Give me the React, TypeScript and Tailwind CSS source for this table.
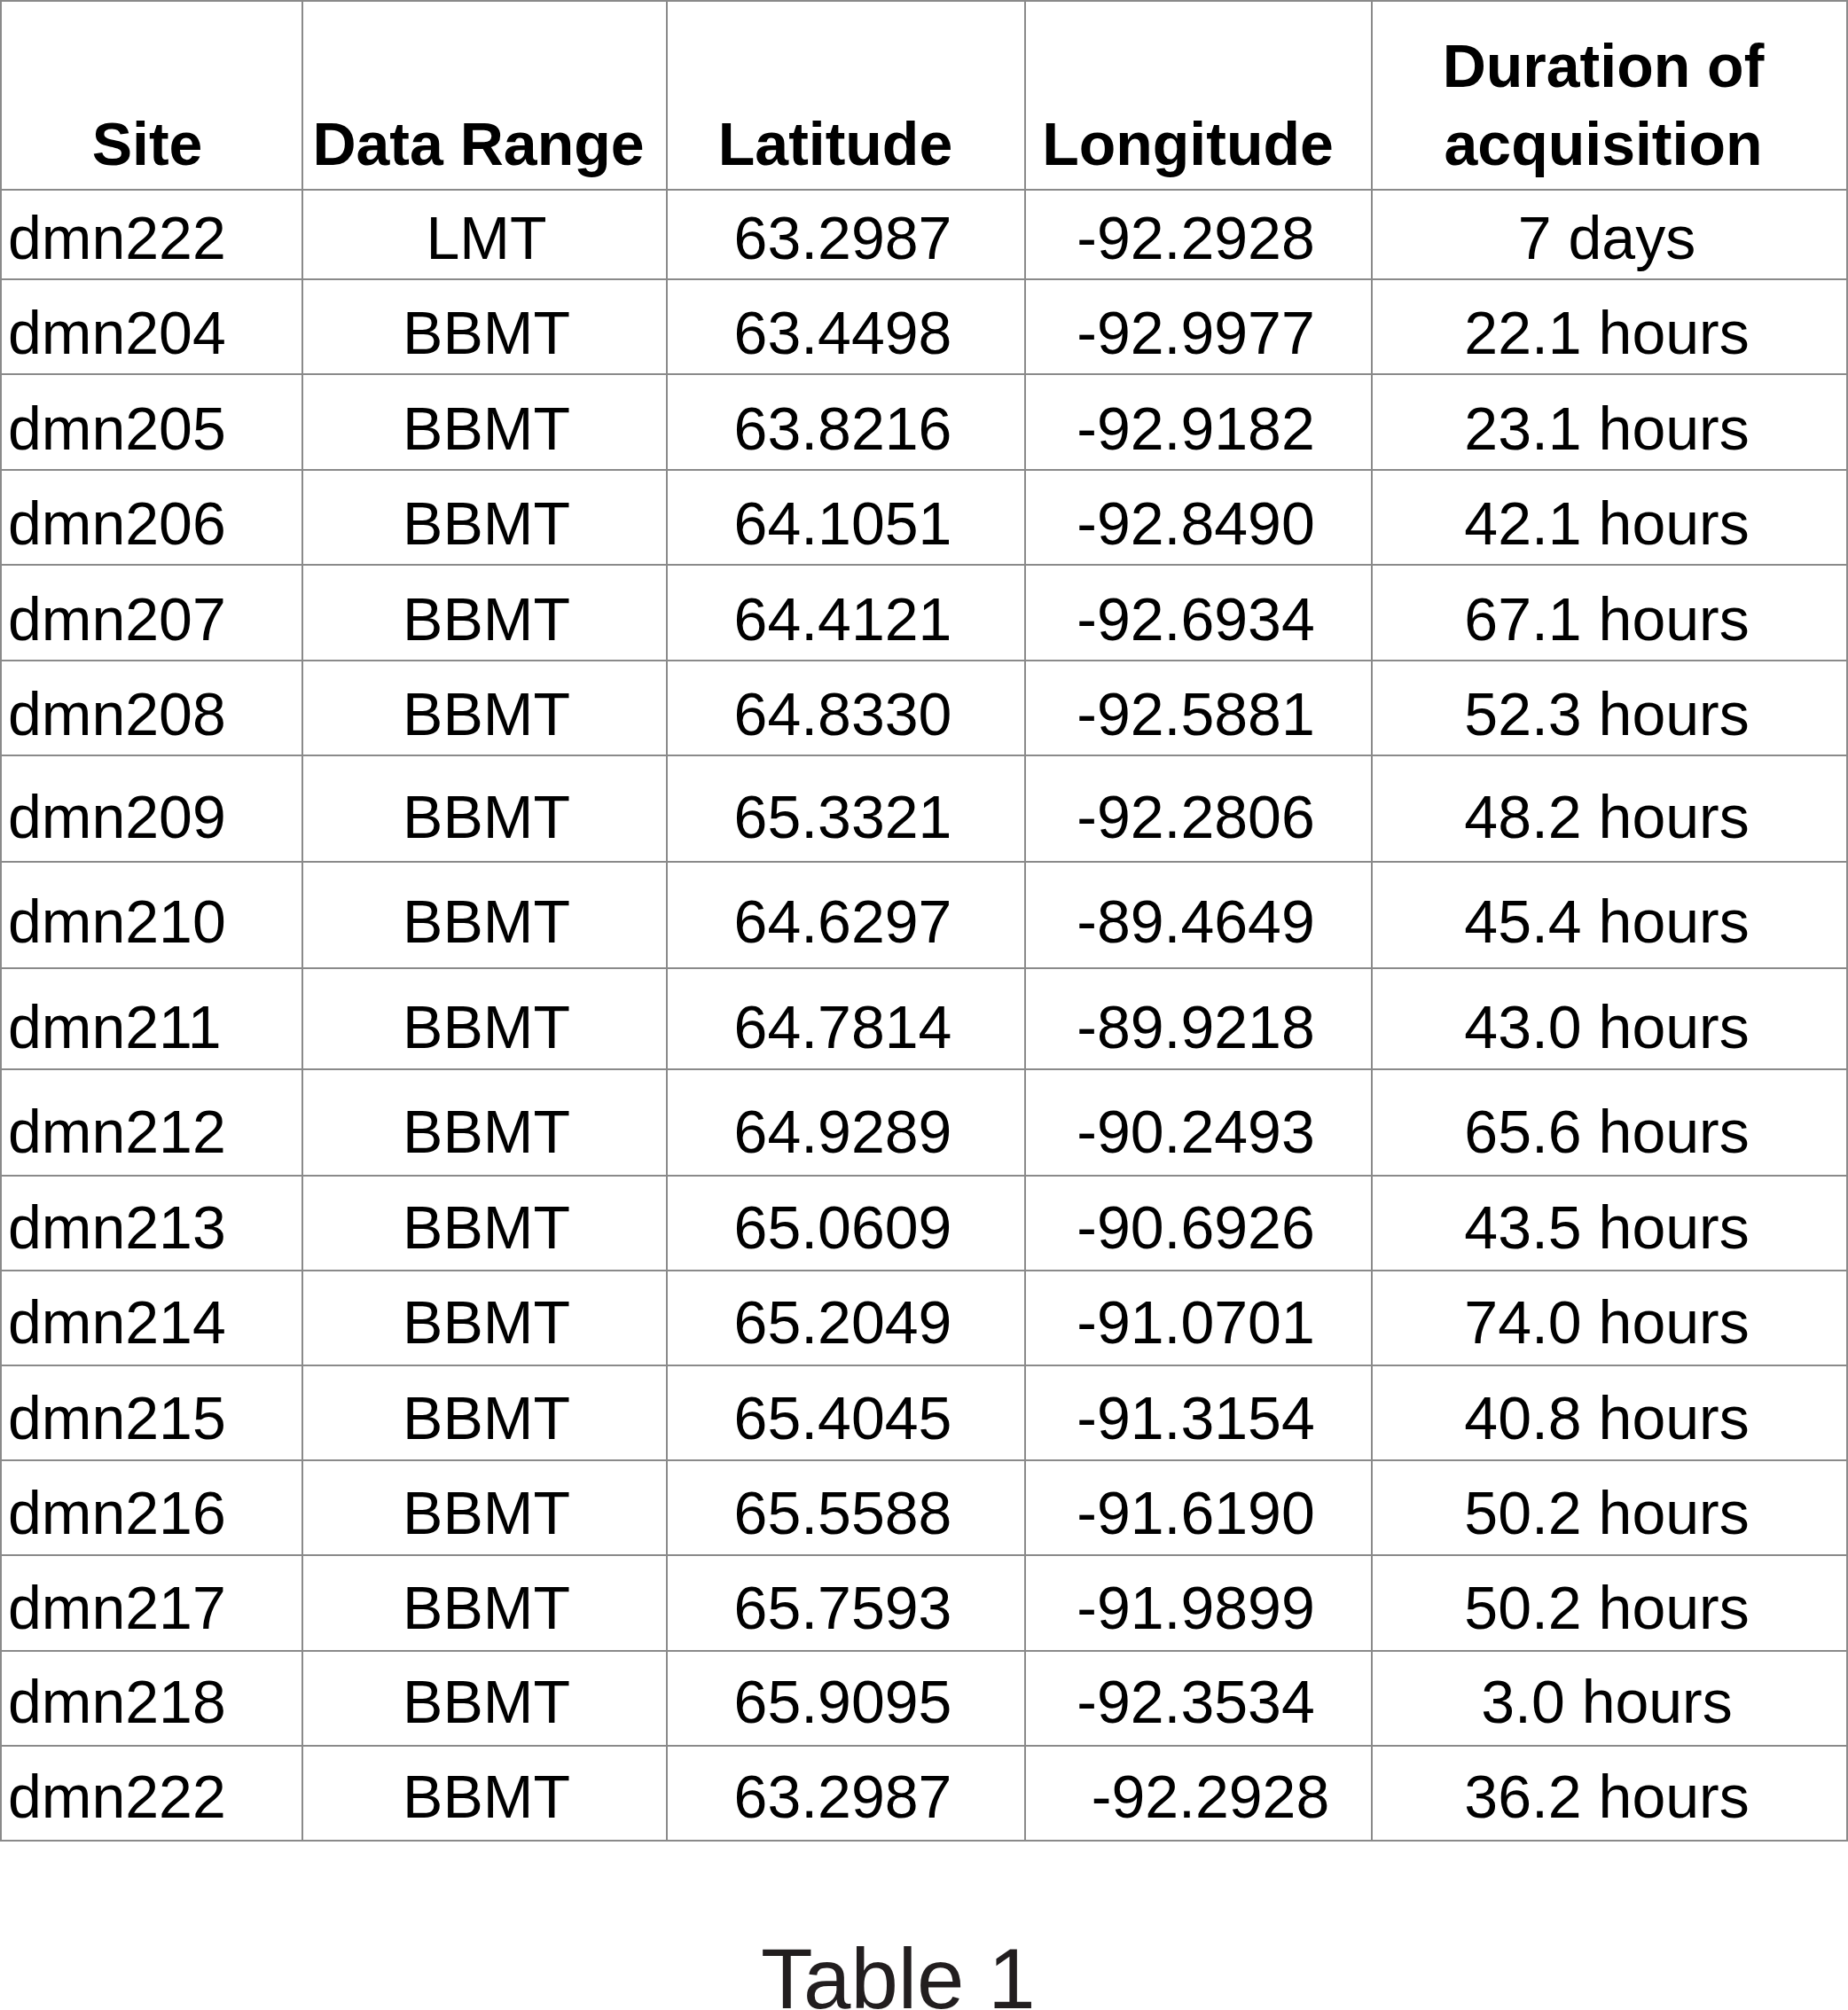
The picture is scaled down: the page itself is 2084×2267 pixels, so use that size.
import React from 'react';

interface SiteRow {
  site: string;
  range: string;
  lat: string;
  lon: string;
  dur: string;
  // row height and vertical nudge, written out in full for Tailwind
  rowClass: string;
  lonClass?: string;
}

const rows: SiteRow[] = [
  { site: 'dmn222', range: 'LMT', lat: '63.2987', lon: '-92.2928', dur: '7 days', rowClass: 'h-[101px] [&>div]:pt-[7px]' },
  { site: 'dmn204', range: 'BBMT', lat: '63.4498', lon: '-92.9977', dur: '22.1 hours', rowClass: 'h-[107px] [&>div]:pt-[13px]' },
  { site: 'dmn205', range: 'BBMT', lat: '63.8216', lon: '-92.9182', dur: '23.1 hours', rowClass: 'h-[108px] [&>div]:pt-[13px]' },
  { site: 'dmn206', range: 'BBMT', lat: '64.1051', lon: '-92.8490', dur: '42.1 hours', rowClass: 'h-[107px] [&>div]:pt-[12px]' },
  { site: 'dmn207', range: 'BBMT', lat: '64.4121', lon: '-92.6934', dur: '67.1 hours', rowClass: 'h-[108px] [&>div]:pt-[14px]' },
  { site: 'dmn208', range: 'BBMT', lat: '64.8330', lon: '-92.5881', dur: '52.3 hours', rowClass: 'h-[107px] [&>div]:pt-[13px]' },
  { site: 'dmn209', range: 'BBMT', lat: '65.3321', lon: '-92.2806', dur: '48.2 hours', rowClass: 'h-[120px] [&>div]:pt-[18px]' },
  { site: 'dmn210', range: 'BBMT', lat: '64.6297', lon: '-89.4649', dur: '45.4 hours', rowClass: 'h-[120px] [&>div]:pt-[13px]' },
  { site: 'dmn211', range: 'BBMT', lat: '64.7814', lon: '-89.9218', dur: '43.0 hours', rowClass: 'h-[114px] [&>div]:pt-[17px]' },
  { site: 'dmn212', range: 'BBMT', lat: '64.9289', lon: '-90.2493', dur: '65.6 hours', rowClass: 'h-[120px] [&>div]:pt-[20px]' },
  { site: 'dmn213', range: 'BBMT', lat: '65.0609', lon: '-90.6926', dur: '43.5 hours', rowClass: 'h-[107px] [&>div]:pt-[9px]' },
  { site: 'dmn214', range: 'BBMT', lat: '65.2049', lon: '-91.0701', dur: '74.0 hours', rowClass: 'h-[107px] [&>div]:pt-[9px]' },
  { site: 'dmn215', range: 'BBMT', lat: '65.4045', lon: '-91.3154', dur: '40.8 hours', rowClass: 'h-[107px] [&>div]:pt-[11px]' },
  { site: 'dmn216', range: 'BBMT', lat: '65.5588', lon: '-91.6190', dur: '50.2 hours', rowClass: 'h-[107px] [&>div]:pt-[11px]' },
  { site: 'dmn217', range: 'BBMT', lat: '65.7593', lon: '-91.9899', dur: '50.2 hours', rowClass: 'h-[108px] [&>div]:pt-[10px]' },
  { site: 'dmn218', range: 'BBMT', lat: '65.9095', lon: '-92.3534', dur: '3.0 hours', rowClass: 'h-[107px] [&>div]:pt-[7px]' },
  { site: 'dmn222', range: 'BBMT', lat: '63.2987', lon: '-92.2928', dur: '36.2 hours', rowClass: 'h-[107px] [&>div]:pt-[6px]', lonClass: 'pl-[27px]' },
];

const cols = 'grid grid-cols-[340px_411px_404px_391px_536px]';
const cell = 'border-r-2 border-b-2 border-[#8a8a8a] flex';

export default function App() {
  return (
    <div className="bg-white text-black font-['Liberation_Sans',Arial,sans-serif] w-[2084px]">
      <div className="w-[2084px] border-l-2 border-t-2 border-[#8a8a8a]">
        {/* header */}
        <div className={`${cols} h-[213px] font-bold text-[68px] leading-[88px]`}>
          <div className={`${cell} items-end justify-center pb-[7px] pr-[10px]`}>Site</div>
          <div className={`${cell} items-end justify-center pb-[7px] pr-[14px]`}>Data Range</div>
          <div className={`${cell} items-end justify-center pb-[7px] pr-[24px]`}>Latitude</div>
          <div className={`${cell} items-end justify-center pb-[7px] pr-[24px]`}>Longitude</div>
          <div className={`${cell} items-end justify-center pb-[7px] pr-[14px] text-center`}>
            Duration of
            <br />
            acquisition
          </div>
        </div>

        {rows.map((r, i) => (
          <div key={i} className={`${cols} ${r.rowClass} text-[68px] leading-[88px]`}>
            <div className={`${cell} items-center pl-[7px]`}>{r.site}</div>
            <div className={`${cell} items-center justify-center pl-[4px]`}>{r.range}</div>
            <div className={`${cell} items-center justify-center pr-[7px]`}>{r.lat}</div>
            <div className={`${cell} items-center justify-center ${r.lonClass ?? 'pr-[6px]'}`}>{r.lon}</div>
            <div className={`${cell} items-center justify-center pr-[6px]`}>{r.dur}</div>
          </div>
        ))}
      </div>

      <div className="mt-[100px] pl-[858px] text-[96px] leading-[110px] text-[#221e1f]">Table 1</div>
    </div>
  );
}
